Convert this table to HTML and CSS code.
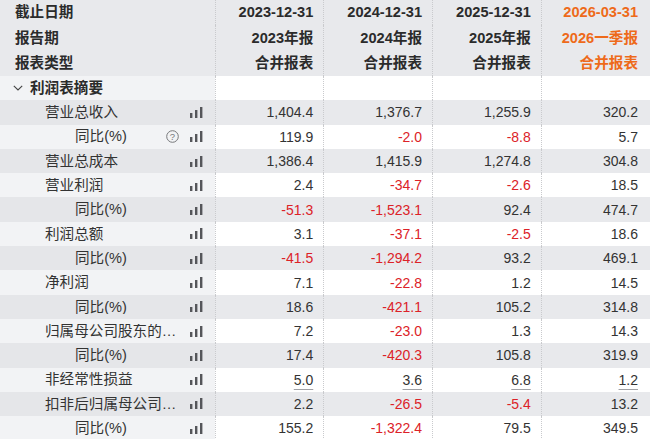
FILE: index.html
```html
<!DOCTYPE html>
<html lang="zh-CN">
<head>
<meta charset="utf-8">
<link rel="stylesheet" href="styles.css">
</head>
<body>
<table class="fin">
  <colgroup>
    <col class="c-label"><col class="c-val"><col class="c-val"><col class="c-val"><col class="c-val">
  </colgroup>
  <thead>
    <tr class="hd">
      <th class="lbl">截止日期</th><th>2023-12-31</th><th>2024-12-31</th><th>2025-12-31</th><th class="hl">2026-03-31</th>
    </tr>
    <tr class="hd">
      <th class="lbl">报告期</th><th>2023年报</th><th>2024年报</th><th>2025年报</th><th class="hl">2026一季报</th>
    </tr>
    <tr class="hd">
      <th class="lbl">报表类型</th><th>合并报表</th><th>合并报表</th><th>合并报表</th><th class="hl">合并报表</th>
    </tr>
  </thead>
  <tbody>
    <tr class="odd section">
      <td class="lbl"><span class="sec"><svg class="chev" viewBox="0 0 10 6" width="10" height="6"><path d="M0.8 0.8 L5 5 L9.2 0.8" fill="none" stroke="#444" stroke-width="1.1"/></svg>利润表摘要</span></td><td></td><td></td><td></td><td></td>
    </tr>
    <tr class="even">
      <td class="lbl"><div class="lab l1"><span class="name">营业总收入</span><span class="icons"><svg class="bars" viewBox="0 0 13 11" width="13" height="11"><rect x="0" y="6" width="2.4" height="5"/><rect x="5" y="3" width="2.4" height="8"/><rect x="10" y="0" width="2.4" height="11"/></svg></span></div></td>
      <td>1,404.4</td><td>1,376.7</td><td>1,255.9</td><td>320.2</td>
    </tr>
    <tr class="odd">
      <td class="lbl"><div class="lab l2"><span class="name">同比(%)</span><span class="icons"><svg class="q" viewBox="0 0 13 13" width="13" height="13"><circle cx="6.5" cy="6.5" r="5.8" fill="none" stroke="#77787b" stroke-width="1"/><text x="6.5" y="9.8" text-anchor="middle" font-size="9.5" font-family="Liberation Sans, sans-serif" fill="#77787b">?</text></svg><svg class="bars" viewBox="0 0 13 11" width="13" height="11"><rect x="0" y="6" width="2.4" height="5"/><rect x="5" y="3" width="2.4" height="8"/><rect x="10" y="0" width="2.4" height="11"/></svg></span></div></td>
      <td>119.9</td><td class="neg">-2.0</td><td class="neg">-8.8</td><td>5.7</td>
    </tr>
    <tr class="even">
      <td class="lbl"><div class="lab l1"><span class="name">营业总成本</span><span class="icons"><svg class="bars" viewBox="0 0 13 11" width="13" height="11"><rect x="0" y="6" width="2.4" height="5"/><rect x="5" y="3" width="2.4" height="8"/><rect x="10" y="0" width="2.4" height="11"/></svg></span></div></td>
      <td>1,386.4</td><td>1,415.9</td><td>1,274.8</td><td>304.8</td>
    </tr>
    <tr class="odd">
      <td class="lbl"><div class="lab l1"><span class="name">营业利润</span><span class="icons"><svg class="bars" viewBox="0 0 13 11" width="13" height="11"><rect x="0" y="6" width="2.4" height="5"/><rect x="5" y="3" width="2.4" height="8"/><rect x="10" y="0" width="2.4" height="11"/></svg></span></div></td>
      <td>2.4</td><td class="neg">-34.7</td><td class="neg">-2.6</td><td>18.5</td>
    </tr>
    <tr class="even">
      <td class="lbl"><div class="lab l2"><span class="name">同比(%)</span><span class="icons"><svg class="bars" viewBox="0 0 13 11" width="13" height="11"><rect x="0" y="6" width="2.4" height="5"/><rect x="5" y="3" width="2.4" height="8"/><rect x="10" y="0" width="2.4" height="11"/></svg></span></div></td>
      <td class="neg">-51.3</td><td class="neg">-1,523.1</td><td>92.4</td><td>474.7</td>
    </tr>
    <tr class="odd">
      <td class="lbl"><div class="lab l1"><span class="name">利润总额</span><span class="icons"><svg class="bars" viewBox="0 0 13 11" width="13" height="11"><rect x="0" y="6" width="2.4" height="5"/><rect x="5" y="3" width="2.4" height="8"/><rect x="10" y="0" width="2.4" height="11"/></svg></span></div></td>
      <td>3.1</td><td class="neg">-37.1</td><td class="neg">-2.5</td><td>18.6</td>
    </tr>
    <tr class="even">
      <td class="lbl"><div class="lab l2"><span class="name">同比(%)</span><span class="icons"><svg class="bars" viewBox="0 0 13 11" width="13" height="11"><rect x="0" y="6" width="2.4" height="5"/><rect x="5" y="3" width="2.4" height="8"/><rect x="10" y="0" width="2.4" height="11"/></svg></span></div></td>
      <td class="neg">-41.5</td><td class="neg">-1,294.2</td><td>93.2</td><td>469.1</td>
    </tr>
    <tr class="odd">
      <td class="lbl"><div class="lab l1"><span class="name">净利润</span><span class="icons"><svg class="bars" viewBox="0 0 13 11" width="13" height="11"><rect x="0" y="6" width="2.4" height="5"/><rect x="5" y="3" width="2.4" height="8"/><rect x="10" y="0" width="2.4" height="11"/></svg></span></div></td>
      <td>7.1</td><td class="neg">-22.8</td><td>1.2</td><td>14.5</td>
    </tr>
    <tr class="even">
      <td class="lbl"><div class="lab l2"><span class="name">同比(%)</span><span class="icons"><svg class="bars" viewBox="0 0 13 11" width="13" height="11"><rect x="0" y="6" width="2.4" height="5"/><rect x="5" y="3" width="2.4" height="8"/><rect x="10" y="0" width="2.4" height="11"/></svg></span></div></td>
      <td>18.6</td><td class="neg">-421.1</td><td>105.2</td><td>314.8</td>
    </tr>
    <tr class="odd">
      <td class="lbl"><div class="lab l1"><span class="name">归属母公司股东的净利润</span><span class="icons"><svg class="bars" viewBox="0 0 13 11" width="13" height="11"><rect x="0" y="6" width="2.4" height="5"/><rect x="5" y="3" width="2.4" height="8"/><rect x="10" y="0" width="2.4" height="11"/></svg></span></div></td>
      <td>7.2</td><td class="neg">-23.0</td><td>1.3</td><td>14.3</td>
    </tr>
    <tr class="even">
      <td class="lbl"><div class="lab l2"><span class="name">同比(%)</span><span class="icons"><svg class="bars" viewBox="0 0 13 11" width="13" height="11"><rect x="0" y="6" width="2.4" height="5"/><rect x="5" y="3" width="2.4" height="8"/><rect x="10" y="0" width="2.4" height="11"/></svg></span></div></td>
      <td>17.4</td><td class="neg">-420.3</td><td>105.8</td><td>319.9</td>
    </tr>
    <tr class="odd">
      <td class="lbl"><div class="lab l1"><span class="name">非经常性损益</span><span class="icons"><svg class="bars" viewBox="0 0 13 11" width="13" height="11"><rect x="0" y="6" width="2.4" height="5"/><rect x="5" y="3" width="2.4" height="8"/><rect x="10" y="0" width="2.4" height="11"/></svg></span></div></td>
      <td><span class="ul">5.0</span></td><td><span class="ul">3.6</span></td><td><span class="ul">6.8</span></td><td><span class="ul">1.2</span></td>
    </tr>
    <tr class="even">
      <td class="lbl"><div class="lab l1"><span class="name">扣非后归属母公司股东的净利润</span><span class="icons"><svg class="bars" viewBox="0 0 13 11" width="13" height="11"><rect x="0" y="6" width="2.4" height="5"/><rect x="5" y="3" width="2.4" height="8"/><rect x="10" y="0" width="2.4" height="11"/></svg></span></div></td>
      <td>2.2</td><td class="neg">-26.5</td><td class="neg">-5.4</td><td>13.2</td>
    </tr>
    <tr class="odd">
      <td class="lbl"><div class="lab l2"><span class="name">同比(%)</span><span class="icons"><svg class="bars" viewBox="0 0 13 11" width="13" height="11"><rect x="0" y="6" width="2.4" height="5"/><rect x="5" y="3" width="2.4" height="8"/><rect x="10" y="0" width="2.4" height="11"/></svg></span></div></td>
      <td>155.2</td><td class="neg">-1,322.4</td><td>79.5</td><td>349.5</td>
    </tr>
  </tbody>
</table>
</body>
</html>
```

FILE: styles.css
```css
html, body {
  margin: 0;
  padding: 0;
  background: #fff;
  overflow: hidden;
}
body {
  font-family: "Liberation Sans", "Noto Sans CJK SC", sans-serif;
  font-size: 14px;
  color: #333;
}
.fin {
  width: 650px;
  border-collapse: collapse;
  table-layout: fixed;
}
.c-label { width: 215px; }
.c-val { width: 108.75px; }

.fin th, .fin td {
  padding: 0 10px 0 0;
  text-align: right;
  white-space: nowrap;
  border-left: 1px dotted #c9cacd;
  line-height: 1;
}
.fin th.lbl, .fin td.lbl {
  border-left: none;
  text-align: left;
  padding: 0;
}
.hd { height: 25.33px; background: #e8e9ec; }
.hd th { font-weight: bold; color: #2b2b2b; font-size: 14.6px; }
.hd th.lbl { padding-left: 15px; }
.hd th.hl { color: #ee6a1a; }
.hd th:last-child, .fin td:last-child { padding-right: 12px; }

tbody tr { height: 24.3px; }
tbody tr.odd { background: #fff; }
tbody tr.odd td.lbl { background: #f2f3f5; }
tbody tr.even { background: #e8e9ec; }
tbody tr.even td.lbl { background: #e5e6e9; }

.sec {
  display: flex;
  align-items: center;
  padding-left: 13px;
  font-weight: bold;
  font-size: 14.6px;
  color: #2b2b2b;
}
.chev { margin-right: 7px; }

.lab {
  display: flex;
  align-items: center;
  padding-right: 12px;
}
.lab.l1 { padding-left: 45px; }
.lab.l2 { padding-left: 75px; }
.name {
  flex: 1;
  min-width: 0;
  overflow: hidden;
  text-overflow: ellipsis;
  white-space: nowrap;
  color: #333;
  font-size: 14.6px;
}
.icons {
  display: flex;
  align-items: center;
  gap: 11px;
  margin-left: 8px;
}
.bars rect { fill: #55565a; }
.bars { display: block; }
.q { display: block; }

.neg { color: #dc2228; }
.ul {
  text-decoration: underline;
  text-decoration-color: #a0a1a5;
  text-decoration-thickness: 1px;
  text-underline-offset: 4px;
}
```
